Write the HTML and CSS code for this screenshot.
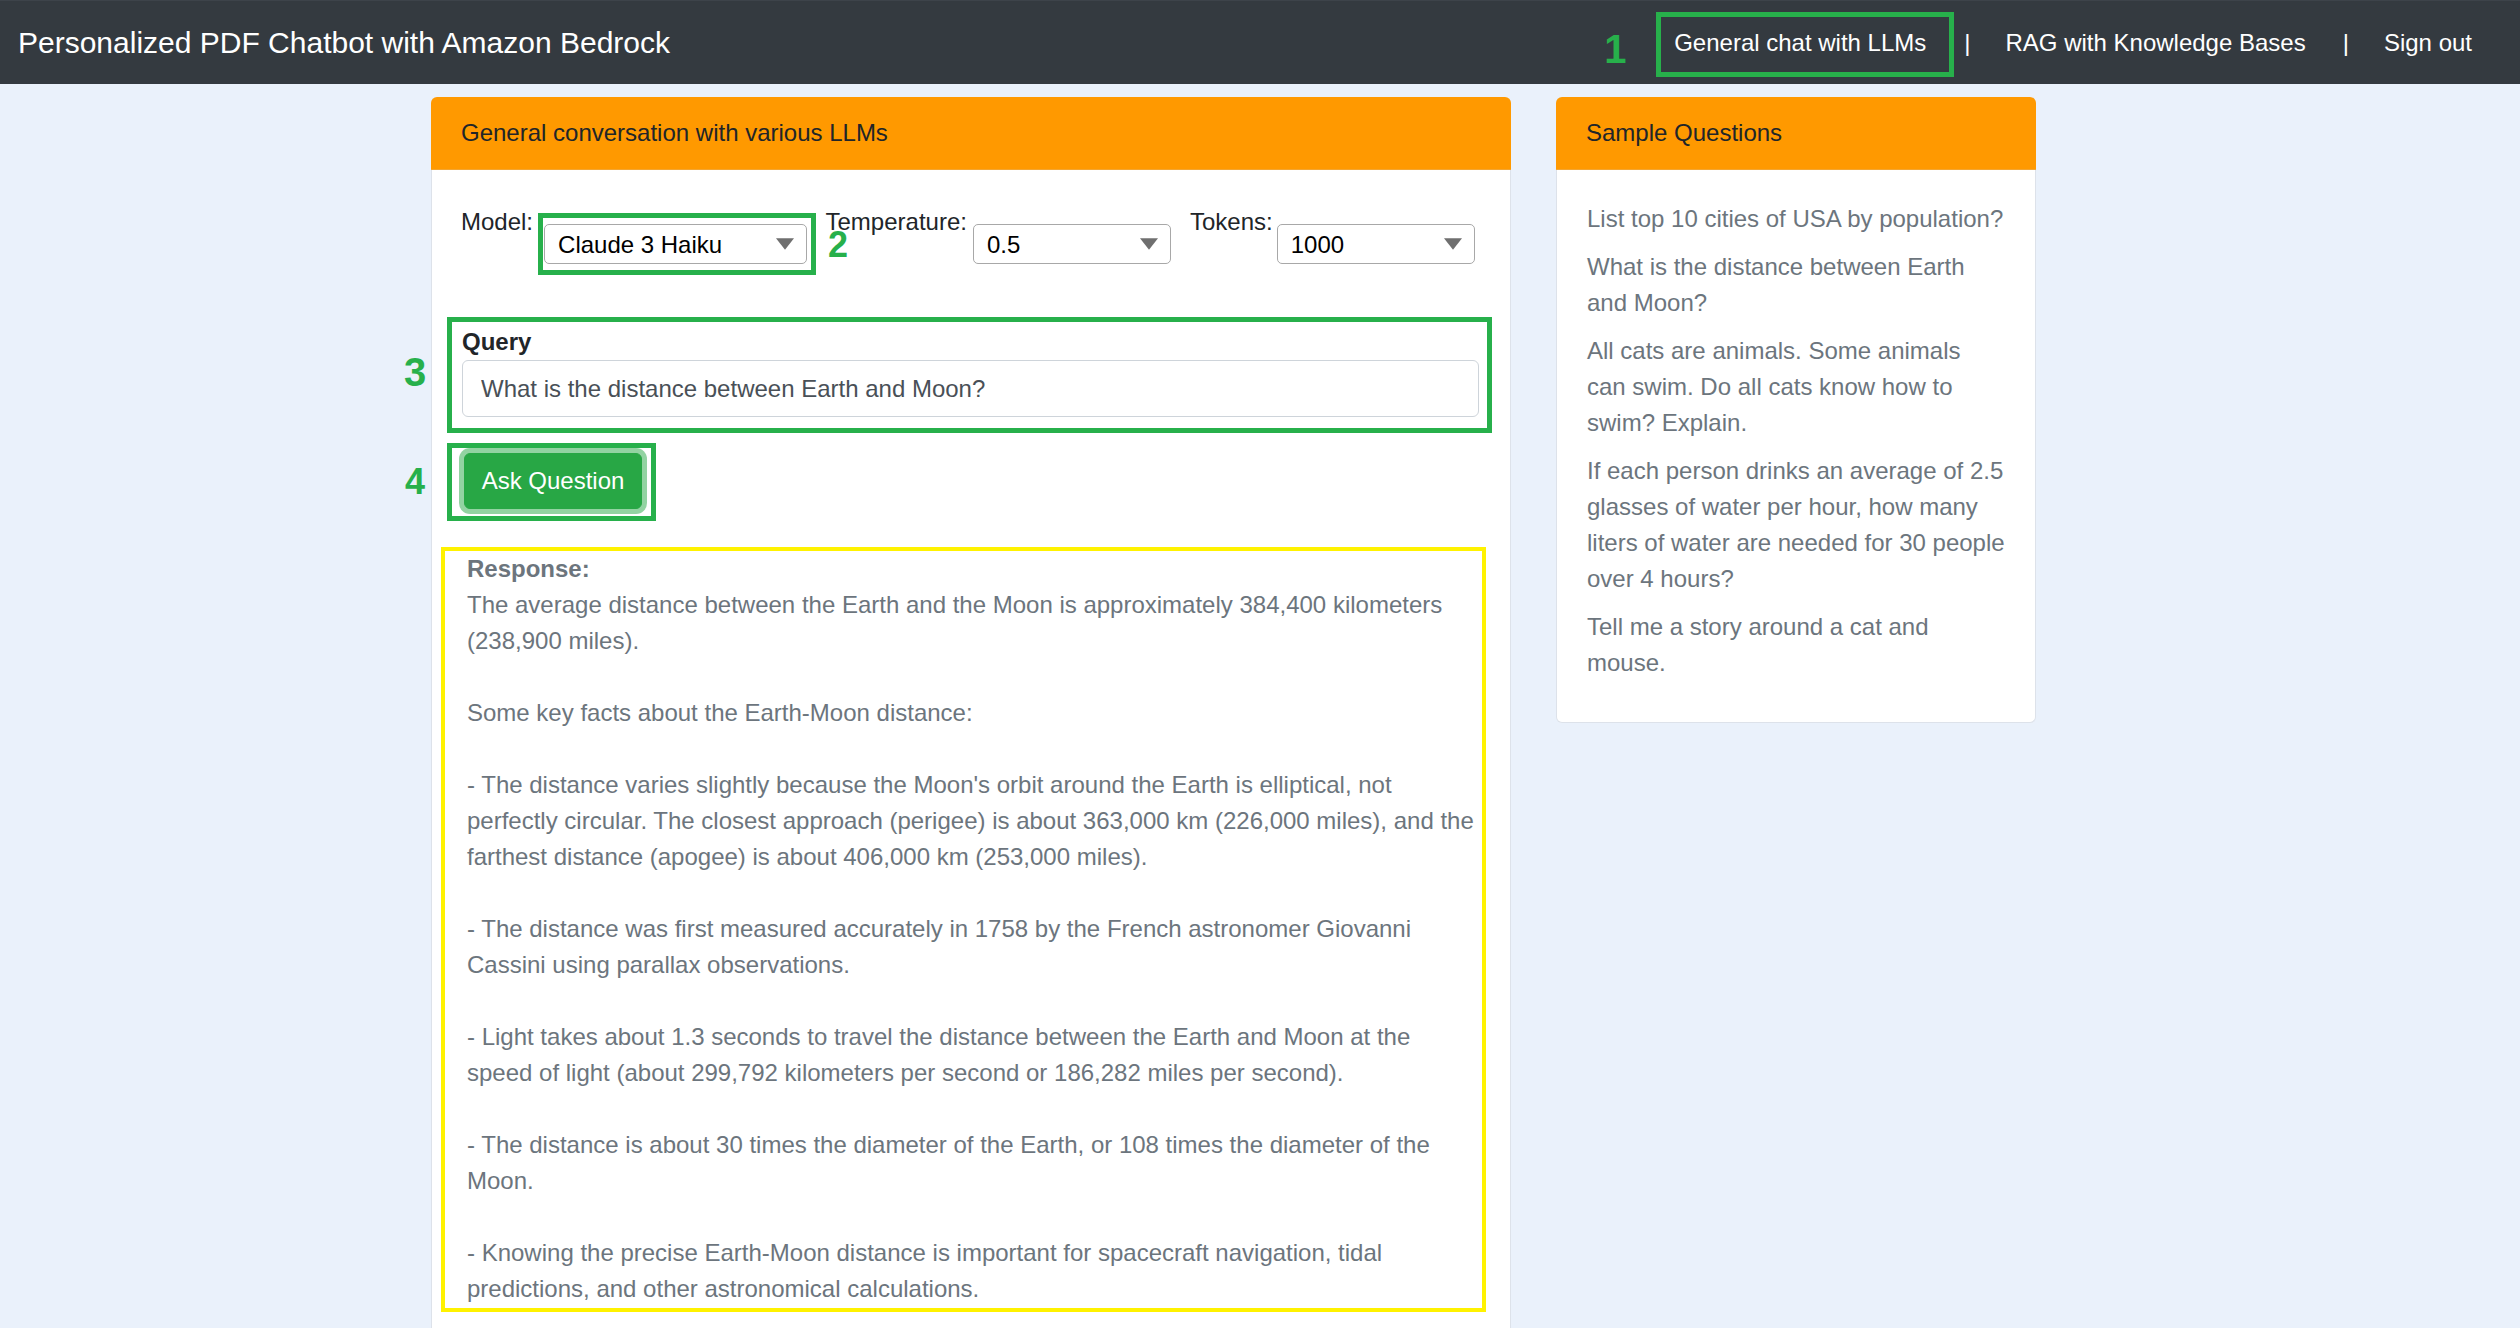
FILE: index.html
```html
<!DOCTYPE html>
<html lang="en">
<head>
<meta charset="utf-8">
<title>Personalized PDF Chatbot with Amazon Bedrock</title>
<link rel="stylesheet" href="styles.css">
</head>
<body>
<header class="topbar">
  <div class="brand">Personalized PDF Chatbot with Amazon Bedrock</div>
  <nav class="nav">
    <a class="nav-link nav-active">General chat with LLMs<span class="annot-num num-1">1</span></a>
    <span class="sep sep-first">|</span>
    <a class="nav-link">RAG with Knowledge Bases</a>
    <span class="sep">|</span>
    <a class="nav-link">Sign out</a>
  </nav>
</header>

<main class="container">
  <section class="card card-main">
    <div class="card-header">General conversation with various LLMs</div>
    <div class="card-body main-body">
      <div class="controls">
        <div class="ctrl">
          <label class="ctrl-label">Model:</label>
          <div class="annot-select">
            <div class="select-wrap sel-model">
              <select class="select"><option>Claude 3 Haiku</option></select>
              <svg class="caret" viewBox="0 0 17 11"><polygon points="0,0 17,0 8.5,11"/></svg>
            </div>
            <span class="annot-num num-2">2</span>
          </div>
        </div>
        <div class="ctrl">
          <label class="ctrl-label">Temperature:</label>
          <div class="select-wrap sel-small sel-temp">
            <select class="select"><option>0.5</option></select>
            <svg class="caret" viewBox="0 0 17 11"><polygon points="0,0 17,0 8.5,11"/></svg>
          </div>
        </div>
        <div class="ctrl">
          <label class="ctrl-label">Tokens:</label>
          <div class="select-wrap sel-small sel-tokens">
            <select class="select"><option>1000</option></select>
            <svg class="caret" viewBox="0 0 17 11"><polygon points="0,0 17,0 8.5,11"/></svg>
          </div>
        </div>
      </div>

      <div class="annot-query">
        <label class="query-label">Query</label>
        <input class="query-input" type="text" value="What is the distance between Earth and Moon?">
        <span class="annot-num num-3">3</span>
      </div>

      <div class="annot-button">
        <button class="btn-ask">Ask Question</button>
        <span class="annot-num num-4">4</span>
      </div>

      <div class="response"><b class="response-title">Response:</b><br>The average distance between the Earth and the Moon is approximately 384,400 kilometers (238,900 miles).<br><br>Some key facts about the Earth-Moon distance:<br><br>- The distance varies slightly because the Moon's orbit around the Earth is elliptical, not perfectly circular. The closest approach (perigee) is about 363,000 km (226,000 miles), and the farthest distance (apogee) is about 406,000 km (253,000 miles).<br><br>- The distance was first measured accurately in 1758 by the French astronomer Giovanni Cassini using parallax observations.<br><br>- Light takes about 1.3 seconds to travel the distance between the Earth and Moon at the speed of light (about 299,792 kilometers per second or 186,282 miles per second).<br><br>- The distance is about 30 times the diameter of the Earth, or 108 times the diameter of the Moon.<br><br>- Knowing the precise Earth-Moon distance is important for spacecraft navigation, tidal predictions, and other astronomical calculations.</div>
    </div>
  </section>

  <aside class="card card-side">
    <div class="card-header">Sample Questions</div>
    <div class="card-body side-body">
      <p class="sample">List top 10 cities of USA by population?</p>
      <p class="sample">What is the distance between Earth and Moon?</p>
      <p class="sample">All cats are animals. Some animals can swim. Do all cats know how to swim? Explain.</p>
      <p class="sample">If each person drinks an average of 2.5 glasses of water per hour, how many liters of water are needed for 30 people over 4 hours?</p>
      <p class="sample">Tell me a story around a cat and mouse.</p>
    </div>
  </aside>
</main>
</body>
</html>
```

FILE: styles.css
```css
* { box-sizing: border-box; }

html, body {
  margin: 0;
  padding: 0;
}

body {
  background: #eaf1fb;
  font-family: "Liberation Sans", Arial, sans-serif;
  font-size: 24px;
  line-height: 36px;
  color: #212529;
  min-height: 1328px;
}

/* ---------- top bar ---------- */
.topbar {
  height: 84px;
  background: #343a40;
  border-top: 1px solid #3d434a;
  display: flex;
  align-items: center;
  justify-content: space-between;
  padding: 0 48px 0 18px;
  color: #ffffff;
}

.brand {
  font-size: 30px;
  line-height: 45px;
  color: #ffffff;
}

.nav {
  display: flex;
  align-items: center;
}

.nav-link {
  color: #ffffff;
  text-decoration: none;
  white-space: nowrap;
}

.nav-active {
  position: relative;
  border: 5px solid #27b04b;
  padding: 8px 23px 11px 13px;
  margin-top: 3px;
}

.sep {
  color: #ffffff;
  margin: 0 35px 0 37px;
}

.sep-first {
  margin-left: 10px;
}

/* ---------- annotations ---------- */
.annot-num {
  position: absolute;
  color: #27b04b;
  font-weight: bold;
  line-height: 1;
}

.num-1 { font-size: 40px; left: -57px; top: 12px; }
.num-2 { font-size: 36px; left: 285px; top: 9px; }
.num-3 { font-size: 40px; left: -48px; top: 30px; }
.num-4 { font-size: 36px; left: -47px; top: 16px; }

/* ---------- layout ---------- */
.container {
  width: 1710px;
  margin: 0 auto;
  padding: 13px 26px 0 26px;
  display: flex;
  align-items: flex-start;
  gap: 45px;
}

.card-main { width: 1080px; }
.card-side { width: 480px; }

.card-header {
  background: #ff9900;
  border-radius: 6px 6px 0 0;
  padding: 18px 30px;
  border-bottom: 1px solid #f3a531;
  color: #212529;
}

.card-body {
  background: #ffffff;
  border: 1px solid #dde2ea;
  border-top: none;
  border-radius: 0 0 6px 6px;
}

/* ---------- main card ---------- */
.main-body {
  padding: 34px 18px 24px 9px;
}

.controls {
  display: grid;
  grid-template-columns: repeat(3, 364.5px);
  margin-left: 20px;
}

.ctrl {
  display: flex;
  align-items: flex-start;
}

.ctrl-label {
  color: #212529;
  white-space: nowrap;
}

.annot-select {
  position: relative;
  margin: 9px 0 0 5px;
  border: 5px solid #27b04b;
  padding: 6px 4px 6px 1px;
}

.select-wrap {
  position: relative;
  height: 40px;
}

.sel-model { width: 263px; }
.sel-small { width: 198px; margin-top: 20px; }
.sel-temp { margin-left: 6px; }
.sel-tokens { margin-left: 4px; }

.select {
  -webkit-appearance: none;
  appearance: none;
  width: 100%;
  height: 40px;
  border: 1px solid #a8a8a8;
  border-radius: 5px;
  background: #ffffff;
  font-family: "Liberation Sans", Arial, sans-serif;
  font-size: 24px;
  color: #000000;
  padding: 0 13px;
  margin: 0;
}

.caret {
  position: absolute;
  right: 13px;
  top: 14px;
  width: 18px;
  height: 12px;
  fill: #6f6f6f;
  pointer-events: none;
}

.annot-query {
  position: relative;
  margin: 42px 0 0 6px;
  width: 1045px;
  border: 5px solid #27b04b;
  padding: 5px 8px 11px 10px;
}

.query-label {
  display: block;
  font-weight: bold;
  line-height: 29px;
  color: #212529;
  margin-bottom: 4px;
}

.query-input {
  display: block;
  width: 100%;
  height: 57px;
  border: 1px solid #ced4da;
  border-radius: 6px;
  padding: 9px 18px;
  font-family: "Liberation Sans", Arial, sans-serif;
  font-size: 24px;
  line-height: 36px;
  color: #495057;
  background: #ffffff;
  outline: none;
}

.annot-button {
  position: relative;
  display: inline-block;
  vertical-align: top;
  margin: 10px 0 0 6px;
  border: 5px solid #27b04b;
  padding: 5px 9px 7px 12px;
}

.btn-ask {
  display: block;
  width: 178px;
  height: 56px;
  background: #28a745;
  border: 1px solid #28a745;
  border-radius: 6px;
  color: #ffffff;
  font-family: "Liberation Sans", Arial, sans-serif;
  font-size: 24px;
  line-height: 36px;
  padding: 9px 0;
  box-shadow: 0 0 0 5px rgba(40, 167, 69, 0.5);
}

.response {
  margin-top: 26px;
  width: 1045px;
  border: 4px solid #fff200;
  padding: 0 4px 1px 22px;
  color: #6c757d;
}

.response-title {
  font-weight: bold;
}

/* ---------- side card ---------- */
.side-body {
  padding: 31px 30px 29px 30px;
}

.sample {
  margin: 0 0 12px 0;
  color: #6c757d;
}
```
